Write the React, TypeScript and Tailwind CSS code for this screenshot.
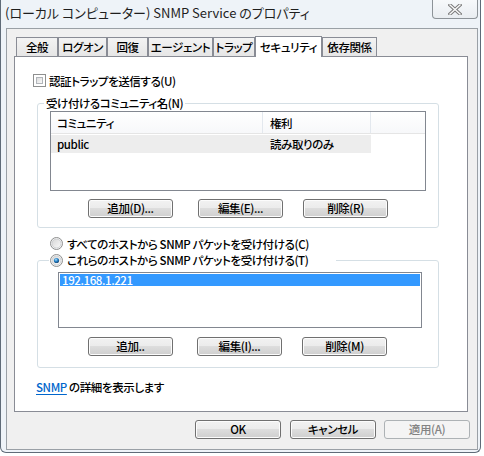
import type { ReactNode } from "react";

const tabs = [
  { label: "全般", w: "w-[42px]" },
  { label: "ログオン", w: "w-[49px]" },
  { label: "回復", w: "w-[41px]" },
  { label: "エージェント", w: "w-[65px]" },
  { label: "トラップ", w: "w-[42px]" },
  { label: "セキュリティ", w: "w-[67px]", active: true },
  { label: "依存関係", w: "w-[55px]" },
];

function Btn({ children, className = "", disabled = false }: { children: ReactNode; className?: string; disabled?: boolean }) {
  if (disabled) {
    return (
      <div className={`h-[19px] w-[86px] rounded-[3px] border border-[#adb2b5] bg-[#f4f4f4] flex items-center justify-center text-[#838383] leading-[17px] whitespace-nowrap ${className}`}>
        {children}
      </div>
    );
  }
  return (
    <div
      className={`h-[19px] w-[85px] rounded-[3px] border border-[#707070] bg-[linear-gradient(to_bottom,#f2f2f2_0%,#ebebeb_50%,#dddddd_50%,#cfcfcf_100%)] shadow-[inset_0_0_0_1px_#fcfcfc] flex items-center justify-center leading-[17px] whitespace-nowrap ${className}`}
    >
      {children}
    </div>
  );
}

function Checkbox() {
  return (
    <div className="w-[13px] h-[13px] shrink-0 border border-[#8e8f8f] bg-white p-[2px]">
      <div className="w-full h-full border border-[#b1b5ba] bg-[linear-gradient(135deg,#dcdcdc,#f9f9f9)]" />
    </div>
  );
}

function Radio({ checked = false }: { checked?: boolean }) {
  return (
    <svg width="13" height="13" viewBox="0 0 13 13" className="shrink-0">
      <defs>
        <linearGradient id={checked ? "rgc" : "rgu"} x1="0" y1="0" x2="1" y2="1">
          <stop offset="0" stopColor="#d6d6d6" />
          <stop offset="1" stopColor="#fbfbfb" />
        </linearGradient>
        <radialGradient id="dot" cx="0.4" cy="0.35" r="0.7">
          <stop offset="0" stopColor="#b8e0f5" />
          <stop offset="0.45" stopColor="#2a8ad0" />
          <stop offset="1" stopColor="#163f6a" />
        </radialGradient>
      </defs>
      <circle cx="6.5" cy="6.5" r="6" fill="#f4f4f4" stroke="#8e8f8f" />
      <circle cx="6.5" cy="6.5" r="4.5" fill={checked ? "url(#rgc)" : "url(#rgu)"} stroke="#c6c9cc" strokeWidth="0.8" />
      {checked && <circle cx="6.5" cy="6.5" r="2.6" fill="url(#dot)" />}
    </svg>
  );
}

export default function App() {
  return (
    <div className="w-[484px] h-[456px] bg-white overflow-hidden font-['Noto_Sans_CJK_JP',sans-serif] [font-feature-settings:'palt'] text-[11.5px] tracking-[-0.4px] font-medium text-black">
      <div className="w-[481px] h-[453px] bg-[#eef3f8] border-x border-b border-[#5f6b78] rounded-b-[6px] flex flex-col">
        {/* title bar */}
        <div className="h-[28px] flex items-start justify-between">
          <div className="pl-[4px] mt-[4px] text-[13px] tracking-normal font-normal leading-[18px] text-[#1e1e1e] whitespace-nowrap">
            (ローカル コンピューター) SNMP Service のプロパティ
          </div>
          <div className="mr-[2px] w-[46px] h-[19px] border border-t-0 border-[#8d9398] rounded-b-[4px] bg-[linear-gradient(to_bottom,#f7f9fb,#e9edf1)] flex items-center justify-center">
            <svg width="14" height="11" viewBox="0 0 14 11">
              <path d="M2 1 L12 10 M12 1 L2 10" stroke="#7a7a7a" strokeWidth="3.4" strokeLinecap="square" />
              <path d="M2 1 L12 10 M12 1 L2 10" stroke="#fafafa" strokeWidth="1.4" strokeLinecap="square" />
            </svg>
          </div>
        </div>

        {/* client area */}
        <div className="ml-[5px] w-[472px] h-[422px] border border-[#9aa0a6] bg-[#f0f0f0] flex flex-col">
          <div className="pl-[7px] pt-[6px]">
            <div className="flex items-end h-[21px] pl-[2px]">
              {tabs.map((t) =>
                t.active ? (
                  <div
                    key={t.label}
                    className={`${t.w} h-[21px] -mb-px relative z-10 bg-white border border-b-0 border-[#898c95] flex items-start justify-center pt-[2px] leading-[16px] whitespace-nowrap`}
                  >
                    {t.label}
                  </div>
                ) : (
                  <div
                    key={t.label}
                    className={`${t.w} h-[19px] bg-[linear-gradient(to_bottom,#f3f3f3,#e6e6e6)] border border-b-0 border-[#898c95] flex items-center justify-center leading-[16px] whitespace-nowrap`}
                  >
                    {t.label}
                  </div>
                )
              )}
            </div>
            {/* tab panel */}
            <div className="w-[454px] h-[356px] bg-white border border-[#898c95] flex flex-col">
              <div className="mt-[17px] ml-[18px] flex items-center h-[13px]">
                <Checkbox />
                <span className="ml-[3px] leading-[16px] whitespace-nowrap">認証トラップを送信する(U)</span>
              </div>

              <fieldset className="mt-[8px] ml-[22px] w-[402px] border border-[#d5dfe5] rounded-[3px] pl-[6px] pb-[9px]">
                <legend className="px-[2px] leading-[16px]">受け付けるコミュニティ名(N)</legend>
                <div className="pl-[6px]">
                  <div className="w-[376px] h-[80px] border border-[#828790] bg-white flex flex-col">
                    <div className="h-[22px] flex border-b border-[#e5e5e5] bg-[linear-gradient(to_bottom,#ffffff,#f7f8fa)]">
                      <div className="w-[212px] pl-[6px] border-r border-[#e3e8ee] flex items-center leading-[16px]">コミュニティ</div>
                      <div className="w-[108px] pl-[7px] border-r border-[#e3e8ee] flex items-center leading-[16px]">権利</div>
                      <div className="flex-1" />
                    </div>
                    <div className="mt-px h-[18px] w-[320px] bg-[#ededed] flex items-center">
                      <div className="w-[212px] pl-[6px] leading-[16px]">public</div>
                      <div className="pl-[7px] leading-[16px]">読み取りのみ</div>
                    </div>
                  </div>
                  <div className="mt-[8px] flex">
                    <Btn className="ml-[38px]">追加(D)...</Btn>
                    <Btn className="ml-[25px]">編集(E)...</Btn>
                    <Btn className="ml-[20px]">削除(R)</Btn>
                  </div>
                </div>
              </fieldset>

              <div className="mt-[9px] ml-[35px] h-[13px] flex items-center">
                <Radio />
                <span className="ml-[4px] leading-[16px] whitespace-nowrap">すべてのホストから SNMP パケットを受け付ける(C)</span>
              </div>

              <fieldset className="mt-[2px] ml-[22px] w-[402px] border border-[#d5dfe5] rounded-[3px] pl-[6px] pb-[11px]">
                <legend className="ml-[5px] pl-[1px] pr-[28px] leading-[16px]">
                  <span className="flex items-center">
                    <Radio checked />
                    <span className="ml-[4px] whitespace-nowrap">これらのホストから SNMP パケットを受け付ける(T)</span>
                  </span>
                </legend>
                <div className="mt-[4px] ml-[14px] w-[364px] h-[56px] border border-[#828790] bg-white p-px">
                  <div className="h-[12px] bg-[#3399ff] text-white pl-[2px] leading-[12px]">192.168.1.221</div>
                </div>
                <div className="mt-[9px] flex">
                  <Btn className="ml-[44px]">追加..</Btn>
                  <Btn className="ml-[24px]">編集(I)...</Btn>
                  <Btn className="ml-[20px]">削除(M)</Btn>
                </div>
              </fieldset>

              <div className="mt-[11px] ml-[21px] leading-[16px]">
                <span className="text-[#0066cc] underline underline-offset-2">SNMP</span>
                <span> の詳細を表示します</span>
              </div>
            </div>
          </div>

          <div className="mt-[8px] mr-[7px] flex justify-end">
            <Btn className="w-[86px]">OK</Btn>
            <Btn className="w-[86px] ml-[9px]">キャンセル</Btn>
            <Btn disabled className="ml-[8px]">適用(A)</Btn>
          </div>
        </div>
      </div>
    </div>
  );
}
